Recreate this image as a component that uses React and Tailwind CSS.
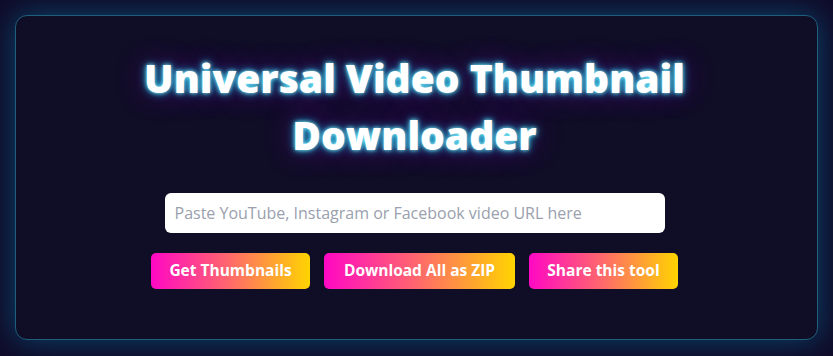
export default function App() {
  const btn =
    "h-[36px] rounded-[5px] bg-[linear-gradient(90deg,#ff08c4,#ff6a6a_50%,#ffd400)] text-[15.5px] font-bold text-white";
  return (
    <div className="min-h-[356px] bg-[#0f0c29] p-[15px]" style={{ fontFamily: '"Open Sans", "Noto Sans", sans-serif' }}>
      <div className="flex flex-col items-center rounded-xl border border-[#1e5f7c] bg-[#100d26] pt-[33px] pb-[50px] pr-1 shadow-[0_0_30px_rgba(0,190,255,0.32)]">
        <h1 className="text-center text-[39px] font-extrabold leading-[57px] text-white [text-shadow:0_0_4px_#8ff4ff,0_0_10px_rgba(0,215,255,0.85),0_0_30px_rgba(170,0,255,0.45)]">
          Universal Video Thumbnail
          <br />
          Downloader
        </h1>
        <input
          type="text"
          placeholder="Paste YouTube, Instagram or Facebook video URL here"
          className="mt-[30px] h-[40px] w-[500px] rounded-md bg-white px-[10px] text-[16px] text-gray-800 outline-none placeholder:text-[#9aa0ad]"
        />
        <div className="mt-[20px] flex gap-[14px]">
          <button className={`${btn} w-[159px]`}>Get Thumbnails</button>
          <button className={`${btn} w-[191px]`}>Download All as ZIP</button>
          <button className={`${btn} w-[149px]`}>Share this tool</button>
        </div>
      </div>
    </div>
  );
}
